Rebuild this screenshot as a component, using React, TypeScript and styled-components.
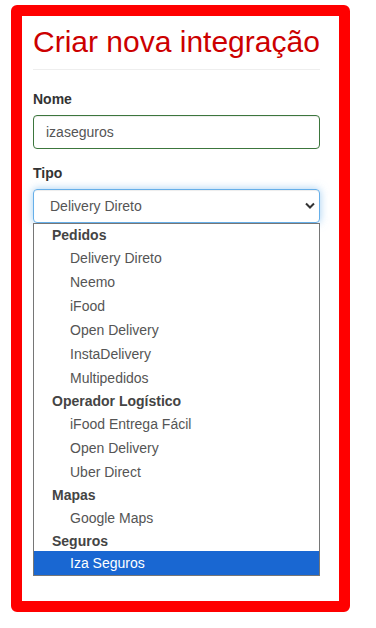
import React from "react";
import styled, { createGlobalStyle } from "styled-components";

const GlobalStyle = createGlobalStyle`
  html, body {
    margin: 0;
    padding: 0;
    background: #fff;
  }
  body {
    font-family: "Liberation Sans", Arial, sans-serif;
    font-size: 14px;
    line-height: 1.42857;
    color: #333;
  }
  * {
    box-sizing: border-box;
  }
`;

type Group = { label: string; options: string[] };

const groups: Group[] = [
  {
    label: "Pedidos",
    options: ["Delivery Direto", "Neemo", "iFood", "Open Delivery", "InstaDelivery", "Multipedidos"],
  },
  { label: "Operador Logístico", options: ["iFood Entrega Fácil", "Open Delivery", "Uber Direct"] },
  { label: "Mapas", options: ["Google Maps"] },
  { label: "Seguros", options: ["Iza Seguros"] },
];

const selected = "Iza Seguros";

const Frame = styled.div`
  width: 339px;
  margin: 5px 0 0 11px;
  border: 11px solid #ff0000;
  border-radius: 6px;
  padding: 9px 19px 25px 11px;
  background: #fff;
`;

const Title = styled.h2`
  margin: 0 0 20px;
  padding-bottom: 11px;
  border-bottom: 1px solid #eee;
  font-size: 30px;
  font-weight: 400;
  line-height: 33px;
  color: #cc0000;
  white-space: nowrap;
`;

const FormGroup = styled.div`
  margin-bottom: 15px;
`;

const Label = styled.label`
  display: block;
  margin-bottom: 5px;
  font-weight: 700;
  color: #333;
`;

const Input = styled.div`
  height: 34px;
  padding: 6px 12px;
  border: 1px solid #3c763d;
  border-radius: 4px;
  color: #555;
  line-height: 20px;
  box-shadow: inset 0 1px 1px rgba(0, 0, 0, 0.075);
`;

const Select = styled.div`
  display: flex;
  align-items: center;
  justify-content: space-between;
  height: 34px;
  padding: 6px 4px 6px 16px;
  border: 1px solid #66afe9;
  border-radius: 4px;
  color: #555;
  line-height: 20px;
  box-shadow: inset 0 1px 1px rgba(0, 0, 0, 0.075), 0 0 8px rgba(102, 175, 233, 0.6);
`;

const Chevron = styled.svg`
  width: 10px;
  height: 7px;
`;

const Dropdown = styled.div`
  border: 1px solid #767676;
  background: #fff;
  color: #555;
`;

const GroupLabel = styled.div<{ $last?: boolean }>`
  height: ${(p) => (p.$last ? "21px" : "22px")};
  line-height: 22px;
  padding-left: 18px;
  font-weight: 700;
  color: #444;
`;

const Option = styled.div<{ $active?: boolean }>`
  height: 24px;
  line-height: 24px;
  padding-left: 36px;
  color: ${(p) => (p.$active ? "#fff" : "#555")};
  background: ${(p) => (p.$active ? "#1967d2" : "transparent")};
`;

export default function App() {
  return (
    <>
      <GlobalStyle />
      <Frame>
        <Title>Criar nova integração</Title>
        <FormGroup>
          <Label>Nome</Label>
          <Input>izaseguros</Input>
        </FormGroup>
        <div>
          <Label>Tipo</Label>
          <Select>
            <span>Delivery Direto</span>
            <Chevron viewBox="0 0 10 7">
              <polyline points="1,1.5 5,5.5 9,1.5" fill="none" stroke="#333" strokeWidth="2" />
            </Chevron>
          </Select>
          <Dropdown>
            {groups.map((g, i) => (
              <div key={g.label}>
                <GroupLabel $last={i === groups.length - 1}>{g.label}</GroupLabel>
                {g.options.map((o) => (
                  <Option key={o} $active={o === selected}>
                    {o}
                  </Option>
                ))}
              </div>
            ))}
          </Dropdown>
        </div>
      </Frame>
    </>
  );
}
